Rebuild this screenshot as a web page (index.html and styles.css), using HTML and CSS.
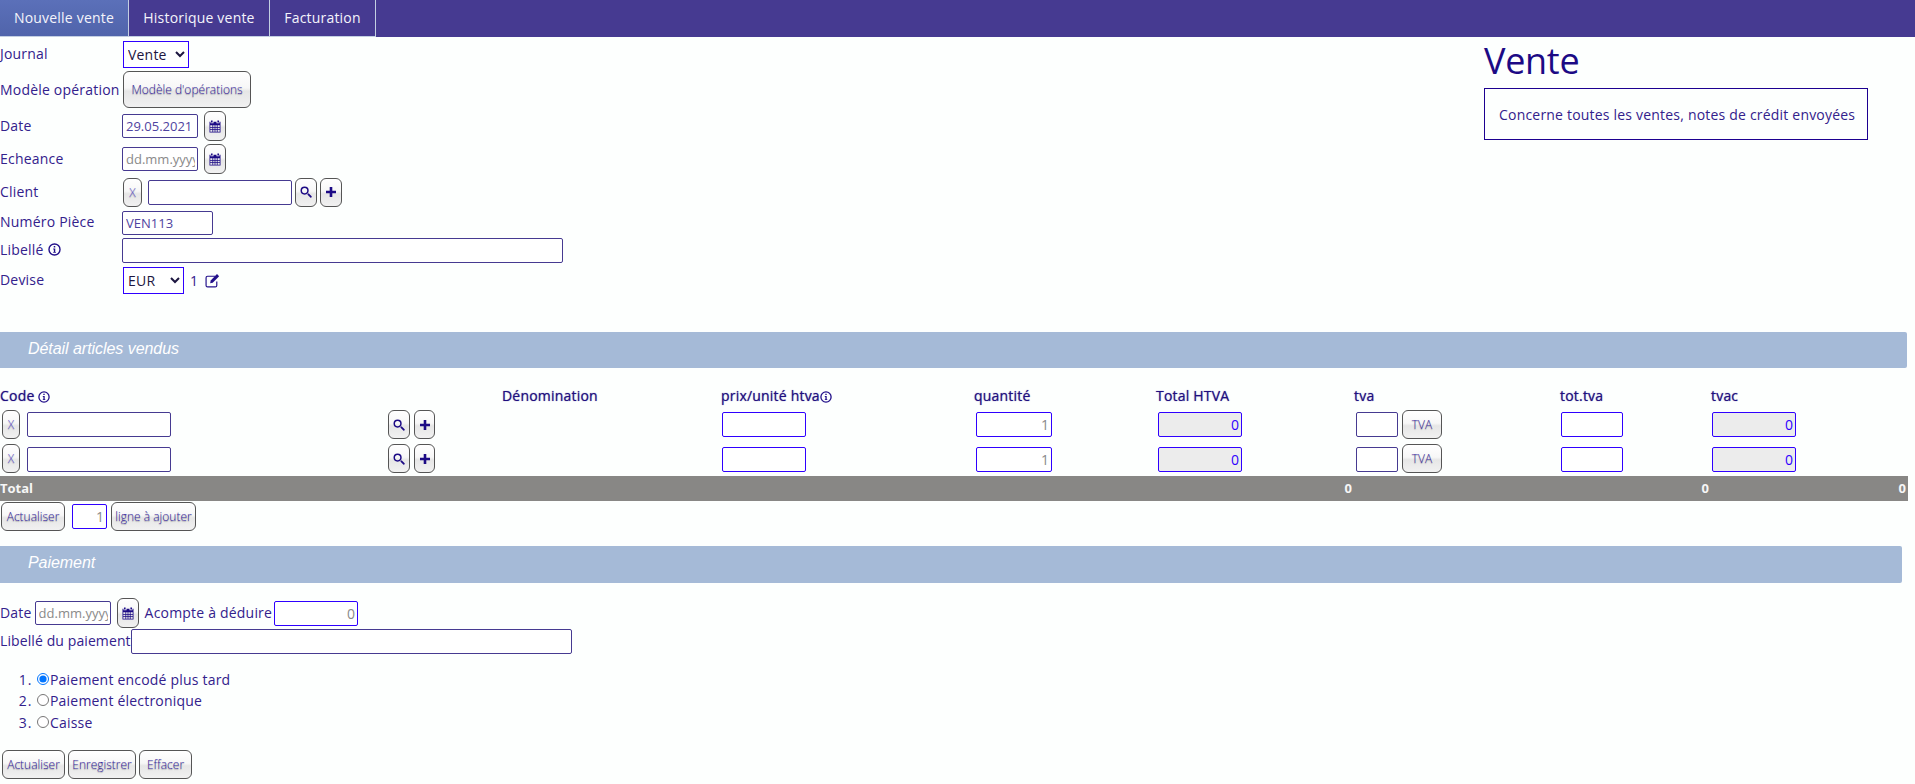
FILE: index.html
```html
<!DOCTYPE html>
<html lang="fr">
<head>
<meta charset="utf-8">
<title>Vente</title>
<link rel="stylesheet" href="styles.css">
</head>
<body>
<svg class="sprite" width="0" height="0" aria-hidden="true">
  <symbol id="i-cal" viewBox="0 0 12 13">
    <path d="M2 0.5h1.6v2H2zM8.4 0.5H10v2H8.4z"/>
    <path fill-rule="evenodd" d="M0.5 1.8h1v1.4h3V1.8h3v1.4h3V1.8h1v10.7h-11zM1.3 5.2v1.7h2.1V5.2zM4.2 5.2v1.7h1.4V5.2zM6.4 5.2v1.7h1.4V5.2zM8.6 5.2v1.7h2.1V5.2zM1.3 7.7v1.6h2.1V7.7zM4.2 7.7v1.6h1.4V7.7zM6.4 7.7v1.6h1.4V7.7zM8.6 7.7v1.6h2.1V7.7zM1.3 10.1v1.6h2.1v-1.6zM4.2 10.1v1.6h1.4v-1.6zM6.4 10.1v1.6h1.4v-1.6zM8.6 10.1v1.6h2.1v-1.6z"/>
  </symbol>
  <symbol id="i-search" viewBox="0 0 12 12">
    <path fill-rule="evenodd" d="M4.6 0.5a4.1 4.1 0 1 1 0 8.2a4.1 4.1 0 0 1 0-8.2zM4.6 2a2.6 2.6 0 1 0 0 5.2a2.6 2.6 0 0 0 0-5.2z"/>
    <path d="M7.3 8.6l1.3-1.3l3 3q0.4 0.5 0 0.9l-0.4 0.4q-0.5 0.4-0.9 0z"/>
  </symbol>
  <symbol id="i-plus" viewBox="0 0 12 12">
    <path d="M4.7 1h2.6v3.7H11v2.6H7.3V11H4.7V7.3H1V4.7h3.7z"/>
  </symbol>
  <symbol id="i-edit" viewBox="0 0 14 14">
    <path d="M9.5 3H2.4Q1 3 1 4.4v7.2Q1 13 2.4 13h7.2q1.4 0 1.4-1.4V8" fill="none" stroke="currentColor" stroke-width="1.1"/>
    <path d="M11.2 1l2 2l-6 6L4.8 9.6l0.5-2.6z"/>
  </symbol>
  <symbol id="i-info" viewBox="0 0 12 12">
    <circle cx="6" cy="6" r="5.1" fill="none" stroke="currentColor" stroke-width="1.3"/>
    <path d="M5.3 2.7h1.4v1.4H5.3zM4.8 5h1.9v3.2h0.6v0.9H4.8V8.2h0.6V5.9h-0.6z"/>
  </symbol>
</svg>

<nav class="tabs">
  <a class="tab tab-active">Nouvelle vente</a>
  <a class="tab tab-second">Historique vente</a>
  <a class="tab tab-third">Facturation</a>
</nav>

<main>
  <section class="top">
    <form class="form">
      <div class="row row-journal">
        <label class="lbl">Journal</label>
        <select class="sel sel-journal"><option>Vente</option></select>
      </div>
      <div class="row row-model">
        <label class="lbl lbl-model">Modèle opération</label>
        <button type="button" class="btn btn-model">Modèle d'opérations</button>
      </div>
      <div class="row row-30">
        <label class="lbl">Date</label>
        <input class="inp inp-date" value="29.05.2021">
        <button type="button" class="btn btn-ico btn-cal"><svg class="ico"><use href="#i-cal"/></svg></button>
      </div>
      <div class="row row-30">
        <label class="lbl">Echeance</label>
        <input class="inp inp-date" placeholder="dd.mm.yyyy">
        <button type="button" class="btn btn-ico btn-cal"><svg class="ico"><use href="#i-cal"/></svg></button>
      </div>
      <div class="row row-30">
        <label class="lbl">Client</label>
        <button type="button" class="btn btn-x">X</button>
        <input class="inp inp-client">
        <button type="button" class="btn btn-ico btn-search"><svg class="ico"><use href="#i-search"/></svg></button>
        <button type="button" class="btn btn-ico btn-plus"><svg class="ico"><use href="#i-plus"/></svg></button>
      </div>
      <div class="row row-25">
        <label class="lbl">Numéro Pièce</label>
        <input class="inp inp-num" value="VEN113">
      </div>
      <div class="row row-lib">
        <label class="lbl">Libellé <svg class="info info-lbl"><use href="#i-info"/></svg></label>
        <input class="inp inp-lib">
      </div>
      <div class="row row-26">
        <label class="lbl">Devise</label>
        <select class="sel sel-devise"><option>EUR</option></select>
        <span class="rate">1</span>
        <svg class="edit"><use href="#i-edit"/></svg>
      </div>
    </form>
    <aside class="intro">
      <h1 class="title">Vente</h1>
      <p class="note">Concerne toutes les ventes, notes de crédit envoyées</p>
    </aside>
  </section>

  <h2 class="band band-articles">Détail articles vendus</h2>

  <table class="lines">
    <colgroup>
      <col class="c-code"><col class="c-den"><col class="c-prix"><col class="c-qte">
      <col class="c-htva"><col class="c-tva"><col class="c-tot"><col class="c-tvac">
    </colgroup>
    <thead>
      <tr>
        <th>Code <svg class="info"><use href="#i-info"/></svg></th>
        <th>Dénomination</th>
        <th>prix/unité htva<svg class="info"><use href="#i-info"/></svg></th>
        <th>quantité</th>
        <th>Total HTVA</th>
        <th>tva</th>
        <th>tot.tva</th>
        <th>tvac</th>
      </tr>
    </thead>
    <tbody>
      <tr class="line line-a">
        <td>
          <div class="code-wrap">
            <button type="button" class="btn btn-x btn-x-line">X</button>
            <input class="inp inp-code">
            <button type="button" class="btn btn-ico btn-search btn-search-line"><svg class="ico"><use href="#i-search"/></svg></button>
            <button type="button" class="btn btn-ico btn-plus btn-plus-line"><svg class="ico"><use href="#i-plus"/></svg></button>
          </div>
        </td>
        <td></td>
        <td><input class="inp blue inp-prix"></td>
        <td><input class="inp blue num inp-qte" value="1"></td>
        <td><input class="inp blue num calc inp-prix inp-htva" value="0" readonly></td>
        <td><div class="code-wrap"><input class="inp inp-tva"><button type="button" class="btn btn-tva">TVA</button></div></td>
        <td><input class="inp blue inp-tot"></td>
        <td><input class="inp blue num calc inp-prix" value="0" readonly></td>
      </tr>
      <tr class="line line-b">
        <td>
          <div class="code-wrap">
            <button type="button" class="btn btn-x btn-x-line">X</button>
            <input class="inp inp-code">
            <button type="button" class="btn btn-ico btn-search btn-search-line"><svg class="ico"><use href="#i-search"/></svg></button>
            <button type="button" class="btn btn-ico btn-plus btn-plus-line"><svg class="ico"><use href="#i-plus"/></svg></button>
          </div>
        </td>
        <td></td>
        <td><input class="inp blue inp-prix"></td>
        <td><input class="inp blue num inp-qte" value="1"></td>
        <td><input class="inp blue num calc inp-prix inp-htva" value="0" readonly></td>
        <td><div class="code-wrap"><input class="inp inp-tva"><button type="button" class="btn btn-tva">TVA</button></div></td>
        <td><input class="inp blue inp-tot"></td>
        <td><input class="inp blue num calc inp-prix" value="0" readonly></td>
      </tr>
    </tbody>
    <tfoot>
      <tr class="total">
        <td>Total</td><td></td><td></td><td></td>
        <td class="t-num">0</td><td></td>
        <td class="t-num">0</td>
        <td class="t-num">0</td>
      </tr>
    </tfoot>
  </table>

  <div class="add-row">
    <button type="button" class="btn btn-actu">Actualiser</button>
    <input class="inp blue num inp-add" value="1">
    <button type="button" class="btn btn-add">ligne à ajouter</button>
  </div>

  <h2 class="band band-pay">Paiement</h2>

  <div class="pay-row pay-row-a">
    <label class="lbl-inline">Date</label>
    <input class="inp inp-date inp-pay-date" placeholder="dd.mm.yyyy">
    <button type="button" class="btn btn-ico btn-cal"><svg class="ico"><use href="#i-cal"/></svg></button>
    <label class="lbl-inline pay-acompte">Acompte à déduire</label>
    <input class="inp blue num inp-prix inp-acompte" value="0">
  </div>
  <div class="pay-row pay-row-b">
    <label class="lbl-inline lbl-tight">Libellé du paiement</label>
    <input class="inp inp-lib">
  </div>

  <ol class="modes">
    <li><input type="radio" name="mode" class="radio" checked>Paiement encodé plus tard</li>
    <li><input type="radio" name="mode" class="radio">Paiement électronique</li>
    <li><input type="radio" name="mode" class="radio">Caisse</li>
  </ol>

  <div class="actions">
    <button type="button" class="btn btn-act1">Actualiser</button>
    <button type="button" class="btn btn-act2">Enregistrer</button>
    <button type="button" class="btn btn-act3">Effacer</button>
  </div>
</main>
</body>
</html>
```
FILE: styles.css
```css
* { box-sizing: border-box; }
html, body { margin: 0; padding: 0; }
body {
  background: #fdfffe;
  color: #33218c;
  font-family: "Open Sans", "Liberation Sans", sans-serif;
  font-size: 14px;
  letter-spacing: 0.2px;
  height: 784px;
  overflow: hidden;
}
.sprite { position: absolute; }

/* top tabs */
.tabs {
  display: flex;
  height: 37px;
  background: #463a91;
}
.tab {
  display: flex;
  align-items: center;
  justify-content: center;
  color: #f4f4fb;
  font-size: 14px;
  height: 37px;
  padding-bottom: 1px;
  border-right: 1px solid #c3cfe2;
  border-bottom: 1px solid #c3cfe2;
}
.tab-active { width: 129px; background: linear-gradient(#5b70b9, #5064ab); }
.tab-second { width: 141px; }
.tab-third { width: 106px; }

/* upper form */
.top { display: flex; justify-content: space-between; height: 295px; }
.form { display: flex; flex-direction: column; gap: 3px; padding-top: 3px; }
.row { display: flex; align-items: center; }
.row-journal { height: 28px; }
.row-model { height: 37px; }
.row-30 { height: 30px; }
.row-25 { height: 25px; }
.row-26 { height: 26px; }
.row-lib { height: 26px; align-items: flex-start; }
.lbl { width: 122px; flex: none; display: flex; align-items: center; gap: 4px; padding-bottom: 2px; }
.lbl-model { padding-bottom: 0; }
.row-lib .lbl { height: 25px; }

.inp {
  height: 25px;
  border: 1px solid #463a91;
  border-radius: 2px;
  background: #fff;
  padding: 0 2px 0 3px;
  color: #4f43a0;
  font-family: inherit;
  font-size: 13px;
}
.inp::placeholder { color: #8a8a8a; opacity: 1; }
.blue { border-color: #2f00ff; }
.num { text-align: right; color: #8a8a8a; font-size: 14px; }
.calc { background: #ececec; color: #2f00ff; }
.inp-date { width: 76px; height: 24px; }
.inp-client { width: 144px; margin: 0 3px 0 6px; }
.inp-num { width: 91px; height: 24px; }
.inp-lib { width: 441px; }

.sel {
  height: 27px;
  border: 1px solid #2f00ff;
  background: #fff;
  color: #1d1640;
  font-family: inherit;
  font-size: 14px;
  letter-spacing: 0.2px;
  margin-left: 1px;
}
.sel-journal { width: 66px; }
.sel-devise { width: 61px; }
.rate { margin-left: 6px; }
.edit { width: 15px; height: 15px; margin-left: 7px; fill: #22108a; color: #22108a; }
.info { width: 12px; height: 12px; fill: #22108a; color: #22108a; flex: none; vertical-align: -2px; }
.info-lbl { width: 13px; height: 13px; }

/* buttons */
.btn {
  height: 29px;
  padding: 0;
  border: 1px solid #555;
  border-radius: 6px;
  background: linear-gradient(#ffffff 0%, #f7f7f7 45%, #e6e6e6 55%, #f1f1f1 100%);
  color: #35259c;
  font-family: "Open Sans", sans-serif;
  font-size: 12px;
  font-weight: 300;
  text-shadow: 0 1px 1px rgba(0, 0, 0, 0.3);
  flex: none;
}
.btn-model { width: 128px; height: 37px; margin-left: 1px; }
.btn-ico { display: inline-flex; align-items: center; justify-content: center; }
.ico { width: 12px; height: 12px; fill: #1c0a85; }
.btn-cal { width: 22px; height: 30px; margin-left: 6px; }
.btn-cal .ico { height: 13px; }
.btn-x { width: 19px; margin-left: 1px; color: #5a4ec8; }
.btn-search { width: 22px; }
.btn-plus { width: 22px; margin-left: 3px; }

/* section bands */
.band {
  margin: 0;
  height: 36px;
  background: #a5bad7;
  border-radius: 0 2px 2px 0;
  color: #fff;
  font-family: "Liberation Sans", sans-serif;
  font-size: 16px;
  font-style: italic;
  font-weight: 400;
  letter-spacing: -0.05px;
  line-height: 34px;
  padding-left: 28px;
}
.band-articles { width: 1907px; }
.band-pay { width: 1902px; height: 37px; margin-top: 15px; }

/* article table */
.lines {
  width: 1908px;
  margin-top: 17px;
  border-collapse: separate;
  border-spacing: 0;
  table-layout: fixed;
}
.c-code { width: 502px; }
.c-den { width: 219px; }
.c-prix { width: 253px; }
.c-qte { width: 182px; }
.c-htva { width: 198px; }
.c-tva { width: 206px; }
.c-tot { width: 151px; }
.c-tvac { width: 197px; }
.lines th {
  height: 25px;
  padding: 0 0 5px;
  text-align: left;
  vertical-align: middle;
  font-weight: 400;
  font-size: 14px;
  color: #1f0f80;
  text-shadow: 0 0 1px rgba(31, 15, 128, 0.7);
}
.lines td { padding: 0; vertical-align: top; }
.line-a { height: 34px; }
.line-b { height: 32px; }
.line .inp { margin-top: 2px; }
.line-b .inp { margin-top: 3px; }
.line td { padding-left: 1px; }
.line td:first-child, .line td:nth-child(6), .line td:nth-child(7) { padding-left: 0; }
.code-wrap { display: flex; align-items: flex-start; }
.btn-x-line { width: 18px; margin-left: 2px; }
.inp-code { width: 144px; margin-left: 7px; }
.btn-search-line { margin-left: 217px; }
.btn-plus-line { width: 21px; margin-left: 4px; }
.inp-prix { width: 84px; }
.inp-htva { margin-left: 1px; }
.inp-qte { width: 76px; margin-left: 1px; }
.inp-tva { width: 42px; margin-left: 2px; }
.btn-tva { width: 40px; margin-left: 4px; }
.inp-tot { width: 62px; margin-left: 1px; }

.total td {
  height: 25px;
  background: #888785;
  color: #f6f6f6;
  font-size: 13px;
  font-weight: 700;
  letter-spacing: 0;
  vertical-align: middle;
  padding-bottom: 2px;
}
.total .t-num { text-align: right; padding-right: 2px; }

/* under the table */
.add-row { display: flex; align-items: center; height: 30px; padding: 1px 0 0 1px; }
.btn-actu { width: 64px; }
.inp-add { width: 35px; margin-left: 7px; }
.btn-add { width: 85px; margin-left: 4px; }

/* payment */
.pay-row { display: flex; align-items: center; }
.pay-row-a { height: 30px; margin-top: 15px; }
.pay-row-b { height: 25px; margin-top: 1px; }
.lbl-inline { padding-bottom: 2px; }
.lbl-tight { letter-spacing: 0.1px; }
.inp-pay-date { margin-left: 3px; }
.pay-acompte { margin-left: 6px; margin-right: 2px; }

.modes { margin: 15px 0 0; padding: 0 0 0 37px; line-height: 21.5px; }
.modes li { height: 22px; }
.modes li:first-child { height: 21px; }
.modes li::marker { letter-spacing: 1px; }
.radio { width: 12px; height: 12px; margin: 0 1px 0 0; vertical-align: 0; }

.actions { display: flex; gap: 3px; margin-top: 16px; padding-left: 2px; }
.btn-act1 { width: 63px; }
.btn-act2 { width: 68px; }
.btn-act3 { width: 53px; }

/* right panel */
.intro { width: 384px; margin-right: 47px; }
.title { margin: 0; font-size: 36px; font-weight: 400; letter-spacing: -0.3px; line-height: 47px; color: #1c0a85; }
.note {
  margin: 4px 0 0;
  height: 52px;
  border: 1px solid #1c0090;
  display: flex;
  align-items: center;
  padding-left: 14px;
  font-size: 14px;
}
```
